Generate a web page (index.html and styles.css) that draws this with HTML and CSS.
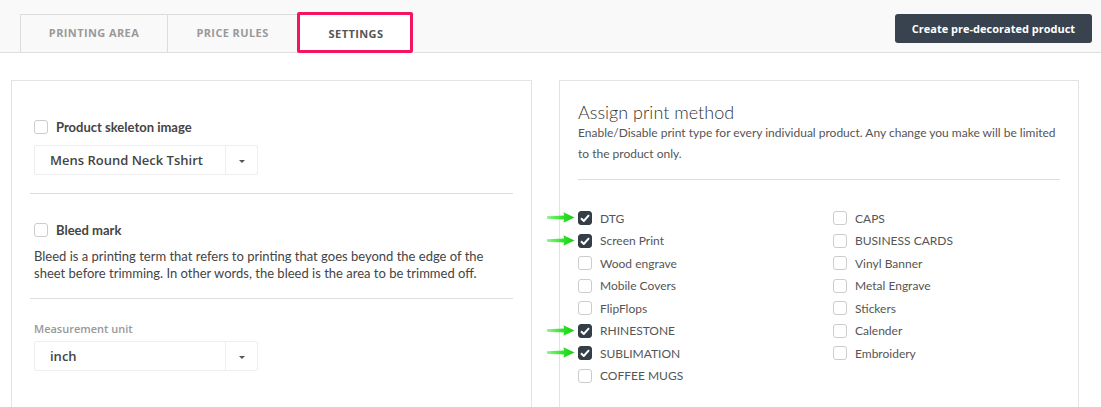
FILE: index.html
```html
<!DOCTYPE html>
<html>
    <head>
        <title>Product settings</title>
        <link rel="stylesheet" href="styles.css">
    </head>
    <body>
        <div class="topBar">
            <div class="tabs">
                <div class="tab">Printing area</div>
                <div class="tab">Price rules</div>
                <div class="tab active">Settings</div>
            </div>
            <button class="createBtn">Create pre-decorated product</button>
        </div>
        <div class="content">
            <div class="panel leftPanel">
                <div class="section firstSection">
                    <label class="checkRow bold"><span class="box"></span>Product skeleton image</label>
                    <div class="select">
                        <div class="selectValue">Mens Round Neck Tshirt</div>
                        <div class="selectArrow"><span class="caret"></span></div>
                    </div>
                </div>
                <hr>
                <div class="section bleedSection">
                    <label class="checkRow bold"><span class="box"></span>Bleed mark</label>
                    <p class="note">Bleed is a printing term that refers to printing that goes beyond the edge of the sheet before trimming. In other words, the bleed is the area to be trimmed off.</p>
                </div>
                <hr>
                <div class="section unitSection">
                    <div class="fieldLabel">Measurement unit</div>
                    <div class="select">
                        <div class="selectValue">inch</div>
                        <div class="selectArrow"><span class="caret"></span></div>
                    </div>
                </div>
            </div>
            <div class="panel rightPanel">
                <h3>Assign print method</h3>
                <p class="desc">Enable/Disable print type for every individual product. Any change you make will be limited to the product only.</p>
                <hr>
                <div class="methods">
                    <div class="column">
                        <label class="method marked"><span class="box checked"></span>DTG</label>
                        <label class="method marked"><span class="box checked"></span>Screen Print</label>
                        <label class="method"><span class="box"></span>Wood engrave</label>
                        <label class="method"><span class="box"></span>Mobile Covers</label>
                        <label class="method"><span class="box"></span>FlipFlops</label>
                        <label class="method marked"><span class="box checked"></span>RHINESTONE</label>
                        <label class="method marked"><span class="box checked"></span>SUBLIMATION</label>
                        <label class="method"><span class="box"></span>COFFEE MUGS</label>
                    </div>
                    <div class="column">
                        <label class="method"><span class="box"></span>CAPS</label>
                        <label class="method"><span class="box"></span>BUSINESS CARDS</label>
                        <label class="method"><span class="box"></span>Vinyl Banner</label>
                        <label class="method"><span class="box"></span>Metal Engrave</label>
                        <label class="method"><span class="box"></span>Stickers</label>
                        <label class="method"><span class="box"></span>Calender</label>
                        <label class="method"><span class="box"></span>Embroidery</label>
                    </div>
                </div>
            </div>
        </div>
        <script>
            // green pointer arrows next to the checked methods
            var arrow = '<svg class="arrow" width="28" height="11" viewBox="0 0 28 11"><defs><linearGradient id="g" x1="0" x2="1"><stop offset="0" stop-color="#8af585"/><stop offset="0.6" stop-color="#2ee029"/><stop offset="1" stop-color="#1ccc17"/></linearGradient></defs><path d="M0 4.3 L17 3.6 L16.5 0.3 L27.5 5.5 L16.5 10.7 L17 7.4 L0 6.7 Z" fill="url(#g)"/></svg>';
            for (let elem of document.querySelectorAll('.marked')) {
                elem.insertAdjacentHTML('afterbegin', arrow);
            }
            // check mark inside checked boxes
            var tick = '<svg width="10" height="8" viewBox="0 0 10 8"><path d="M1 4.2 L3.8 7 L9 1.2" stroke="#fff" stroke-width="2" fill="none"/></svg>';
            for (let elem of document.querySelectorAll('.checked')) {
                elem.innerHTML = tick;
            }
        </script>
    </body>
</html>
```

FILE: styles.css
```css
*{
    margin: 0;
    padding: 0;
    box-sizing: border-box;
}
body{
    font-family: Lato, "Open Sans", sans-serif;
    color: #555;
    background: #fff;
}
.topBar{
    height: 53px;
    background: #f9f9f9;
    border-bottom: 1px solid #ddd;
    display: flex;
    justify-content: space-between;
    align-items: flex-start;
    padding: 14px 9px 0 20px;
}
.tabs{
    display: flex;
    height: 38px;
    border-top: 1px solid #ddd;
    border-left: 1px solid #ddd;
}
.tab{
    font-family: "Open Sans", sans-serif;
    font-weight: 700;
    font-size: 11px;
    letter-spacing: 0.4px;
    text-transform: uppercase;
    color: #999;
    display: flex;
    align-items: center;
    justify-content: center;
    height: 37px;
    padding-bottom: 2px;
    border-right: 1px solid #ddd;
    width: 147px;
}
.tab:nth-child(2){
    width: 130px;
}
.tab.active{
    position: relative;
    width: 116px;
    background: #fff;
    color: #555;
    border-right: none;
    height: 38px;
}
.tab.active::after{
    content: "";
    position: absolute;
    left: -1px;
    right: 1px;
    top: -3px;
    bottom: 0;
    border: 3px solid #f5145f;
    border-radius: 2px;
}
.createBtn{
    font-family: "Open Sans", sans-serif;
    font-weight: 700;
    font-size: 11px;
    color: #fff;
    background: #38434f;
    border: none;
    border-radius: 3px;
    width: 197px;
    height: 29px;
}
.content{
    display: flex;
    gap: 27px;
    padding: 27px 0 0 11px;
}
.panel{
    border: 1px solid #e3e3e3;
    border-bottom: none;
    background: #fff;
    height: 330px;
}
.leftPanel{
    width: 521px;
    padding: 0 18px;
}
.rightPanel{
    width: 520px;
    padding: 0 18px;
}
hr{
    border: none;
    border-top: 1px solid #ddd;
}
.section{
    padding: 28px 4px 18px;
}
.firstSection{
    padding-top: 38px;
}
.bleedSection{
    padding-bottom: 16px;
}
.unitSection{
    padding-top: 22px;
}
.checkRow{
    display: flex;
    align-items: center;
    gap: 8px;
    font-size: 13px;
    color: #444;
    height: 16px;
}
.bold{
    font-weight: 700;
}
.box{
    width: 14px;
    height: 14px;
    border: 1px solid #ccc;
    border-radius: 3px;
    background: #fff;
    display: flex;
    align-items: center;
    justify-content: center;
    flex-shrink: 0;
}
.box.checked{
    background: #343e49;
    border-color: #343e49;
}
.select{
    margin-top: 10px;
    width: 224px;
    height: 30px;
    border: 1px solid #eee;
    border-radius: 2px;
    display: flex;
}
.selectValue{
    flex: 1;
    font-family: "Open Sans", sans-serif;
    font-weight: 600;
    font-size: 13px;
    color: #444;
    padding-left: 15px;
    display: flex;
    align-items: center;
}
.selectArrow{
    width: 32px;
    border-left: 1px solid #eee;
    display: flex;
    align-items: center;
    justify-content: center;
}
.caret{
    border-left: 3px solid transparent;
    border-right: 3px solid transparent;
    border-top: 3px solid #555;
    margin-top: 2px;
}
.note{
    margin-top: 10px;
    font-size: 13px;
    line-height: 17px;
    color: #444;
}
.fieldLabel{
    font-family: "Open Sans", sans-serif;
    font-weight: 600;
    font-size: 11px;
    line-height: 15px;
    color: #999;
}
.fieldLabel + .select{
    margin-top: 5px;
}
h3{
    font-weight: 300;
    font-size: 18px;
    color: #333;
    margin-top: 20px;
}
.desc{
    font-size: 12px;
    line-height: 21px;
    color: #555;
    margin-top: -1px;
}
.rightPanel hr{
    margin-top: 15px;
}
.methods{
    display: flex;
    padding-top: 27px;
}
.column{
    width: 255px;
    flex-shrink: 0;
    display: flex;
    flex-direction: column;
}
.column + .column{
    width: auto;
    flex: 1;
}
.method{
    position: relative;
    display: flex;
    align-items: center;
    gap: 8px;
    height: 22.5px;
    font-size: 12px;
    color: #555;
}
.arrow{
    position: absolute;
    left: -31px;
    top: 5px;
}
```
